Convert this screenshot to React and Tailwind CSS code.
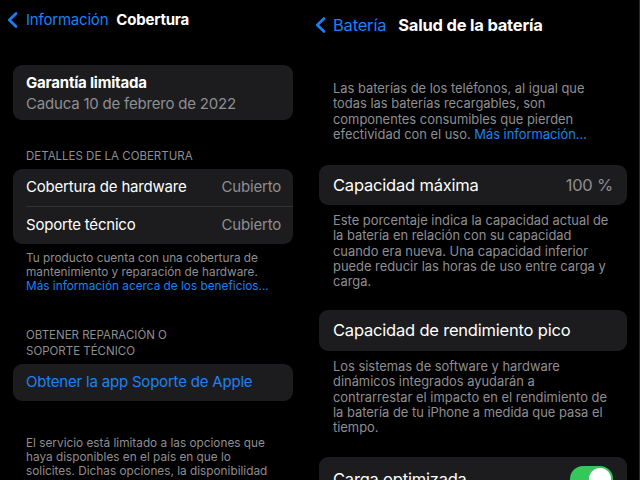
const font = { fontFamily: 'Inter, "Noto Sans", sans-serif' };

function Back({ className }) {
  return (
    <svg viewBox="0 0 11 16" className={className} fill="none">
      <path d="M9 1.5 2.3 8 9 14.5" stroke="#1a82f7" strokeWidth="2.6" strokeLinecap="round" strokeLinejoin="round" />
    </svg>
  );
}

function Lines({ lines, className }) {
  return (
    <div className={className}>
      {lines.map((l, i) => (
        <div key={i} className="whitespace-nowrap">{l}</div>
      ))}
    </div>
  );
}

function CoverageScreen() {
  return (
    <div className="w-[306px] shrink-0">
      <div className="h-[40px] flex items-center pl-[7px]">
        <Back className="w-[11px] h-[16px]" />
        <span className="ml-[8px] text-[15px] text-[#1a82f7] tracking-[-0.2px]">Información</span>
        <span className="ml-[8px] text-[15px] font-bold text-white tracking-[-0.2px]">Cobertura</span>
      </div>

      <div className="mt-[25px] mx-[13px] w-[280px] h-[55px] rounded-[9px] bg-[#1c1c1e] px-[13px] flex flex-col justify-center leading-[21px] text-[15px] tracking-[-0.2px]">
        <span className="font-bold text-white">Garantía limitada</span>
        <span className="text-[#8e8e93]">Caduca 10 de febrero de 2022</span>
      </div>

      <div className="mt-[29px] px-[26px] text-[11.5px] leading-[14px] text-[#8e8e93]">DETALLES DE LA COBERTURA</div>

      <div className="mt-[6px] mx-[13px] w-[280px] rounded-[9px] bg-[#1c1c1e] text-[15px] tracking-[-0.2px]">
        <div className="h-[37px] pl-[13px] pr-[12px] flex items-center justify-between">
          <span className="text-white">Cobertura de hardware</span>
          <span className="text-[#8e8e93]">Cubierto</span>
        </div>
        <div className="ml-[13px] h-px bg-[#333336]" />
        <div className="h-[37px] pl-[13px] pr-[12px] flex items-center justify-between">
          <span className="text-white">Soporte técnico</span>
          <span className="text-[#8e8e93]">Cubierto</span>
        </div>
      </div>

      <div className="mt-[7px] px-[26px] text-[11.8px] leading-[14px] text-[#8e8e93] whitespace-nowrap">
        <div>Tu producto cuenta con una cobertura de</div>
        <div>mantenimiento y reparación de hardware.</div>
        <div className="text-[#1a82f7]">Más información acerca de los beneficios...</div>
      </div>

      <Lines
        className="mt-[34px] px-[26px] text-[11.5px] leading-[16px] text-[#8e8e93]"
        lines={['OBTENER REPARACIÓN O', 'SOPORTE TÉCNICO']}
      />

      <div className="mt-[5px] mx-[13px] w-[280px] h-[37px] rounded-[9px] bg-[#1c1c1e] px-[13px] flex items-center text-[15px] text-[#1a82f7] tracking-[-0.2px]">
        Obtener la app Soporte de Apple
      </div>

      <Lines
        className="mt-[35px] px-[26px] text-[11.8px] leading-[14px] text-[#8e8e93]"
        lines={[
          'El servicio está limitado a las opciones que',
          'haya disponibles en el país en que lo',
          'solicites. Dichas opciones, la disponibilidad',
        ]}
      />
    </div>
  );
}

function BatteryScreen() {
  return (
    <div className="w-[334px] min-w-0 shrink-0 pl-[13px] pr-[12px] border-r border-[#2a2a2c]">
      <div className="h-[50px] flex items-center">
        <Back className="w-[11px] h-[16px] ml-[-4px]" />
        <span className="ml-[7px] text-[16.5px] text-[#1a82f7] tracking-[-0.2px]">Batería</span>
        <span className="ml-[12px] text-[16.5px] font-bold text-white tracking-[-0.2px]">Salud de la batería</span>
      </div>

      <div className="mt-[31px] px-[14px] text-[12.9px] leading-[15.3px] text-[#8e8e93] whitespace-nowrap">
        <div>Las baterías de los teléfonos, al igual que</div>
        <div>todas las baterías recargables, son</div>
        <div>componentes consumibles que pierden</div>
        <div>
          efectividad con el uso. <span className="text-[#1a82f7]">Más información...</span>
        </div>
      </div>

      <div className="mt-[23px] h-[40px] rounded-[9px] bg-[#1c1c1e] px-[14px] flex items-center justify-between text-[16.5px] tracking-[-0.2px]">
        <span className="text-white">Capacidad máxima</span>
        <span className="text-[#8e8e93]">100 %</span>
      </div>

      <Lines
        className="mt-[8px] px-[14px] text-[12.9px] leading-[15.2px] text-[#8e8e93]"
        lines={[
          'Este porcentaje indica la capacidad actual de',
          'la batería en relación con su capacidad',
          'cuando era nueva. Una capacidad inferior',
          'puede reducir las horas de uso entre carga y',
          'carga.',
        ]}
      />

      <div className="mt-[21px] h-[41px] rounded-[9px] bg-[#1c1c1e] px-[14px] flex items-center text-[16.5px] text-white tracking-[-0.2px]">
        Capacidad de rendimiento pico
      </div>

      <Lines
        className="mt-[8px] px-[14px] text-[12.9px] leading-[15.2px] text-[#8e8e93]"
        lines={[
          'Los sistemas de software y hardware',
          'dinámicos integrados ayudarán a',
          'contrarrestar el impacto en el rendimiento de',
          'la batería de tu iPhone a medida que pasa el',
          'tiempo.',
        ]}
      />

      <div className="mt-[22px] h-[44px] rounded-[9px] bg-[#1c1c1e] pl-[14px] pr-[14px] flex items-center justify-between text-[16.5px] text-white tracking-[-0.2px]">
        <span>Carga optimizada</span>
        <div className="w-[43px] h-[26px] rounded-full bg-[#34c759] p-[2px] flex justify-end">
          <div className="w-[22px] h-[22px] rounded-full bg-white" />
        </div>
      </div>
    </div>
  );
}

export default function App() {
  return (
    <div className="w-[640px] h-[480px] overflow-hidden bg-black flex" style={font}>
      <CoverageScreen />
      <BatteryScreen />
    </div>
  );
}
